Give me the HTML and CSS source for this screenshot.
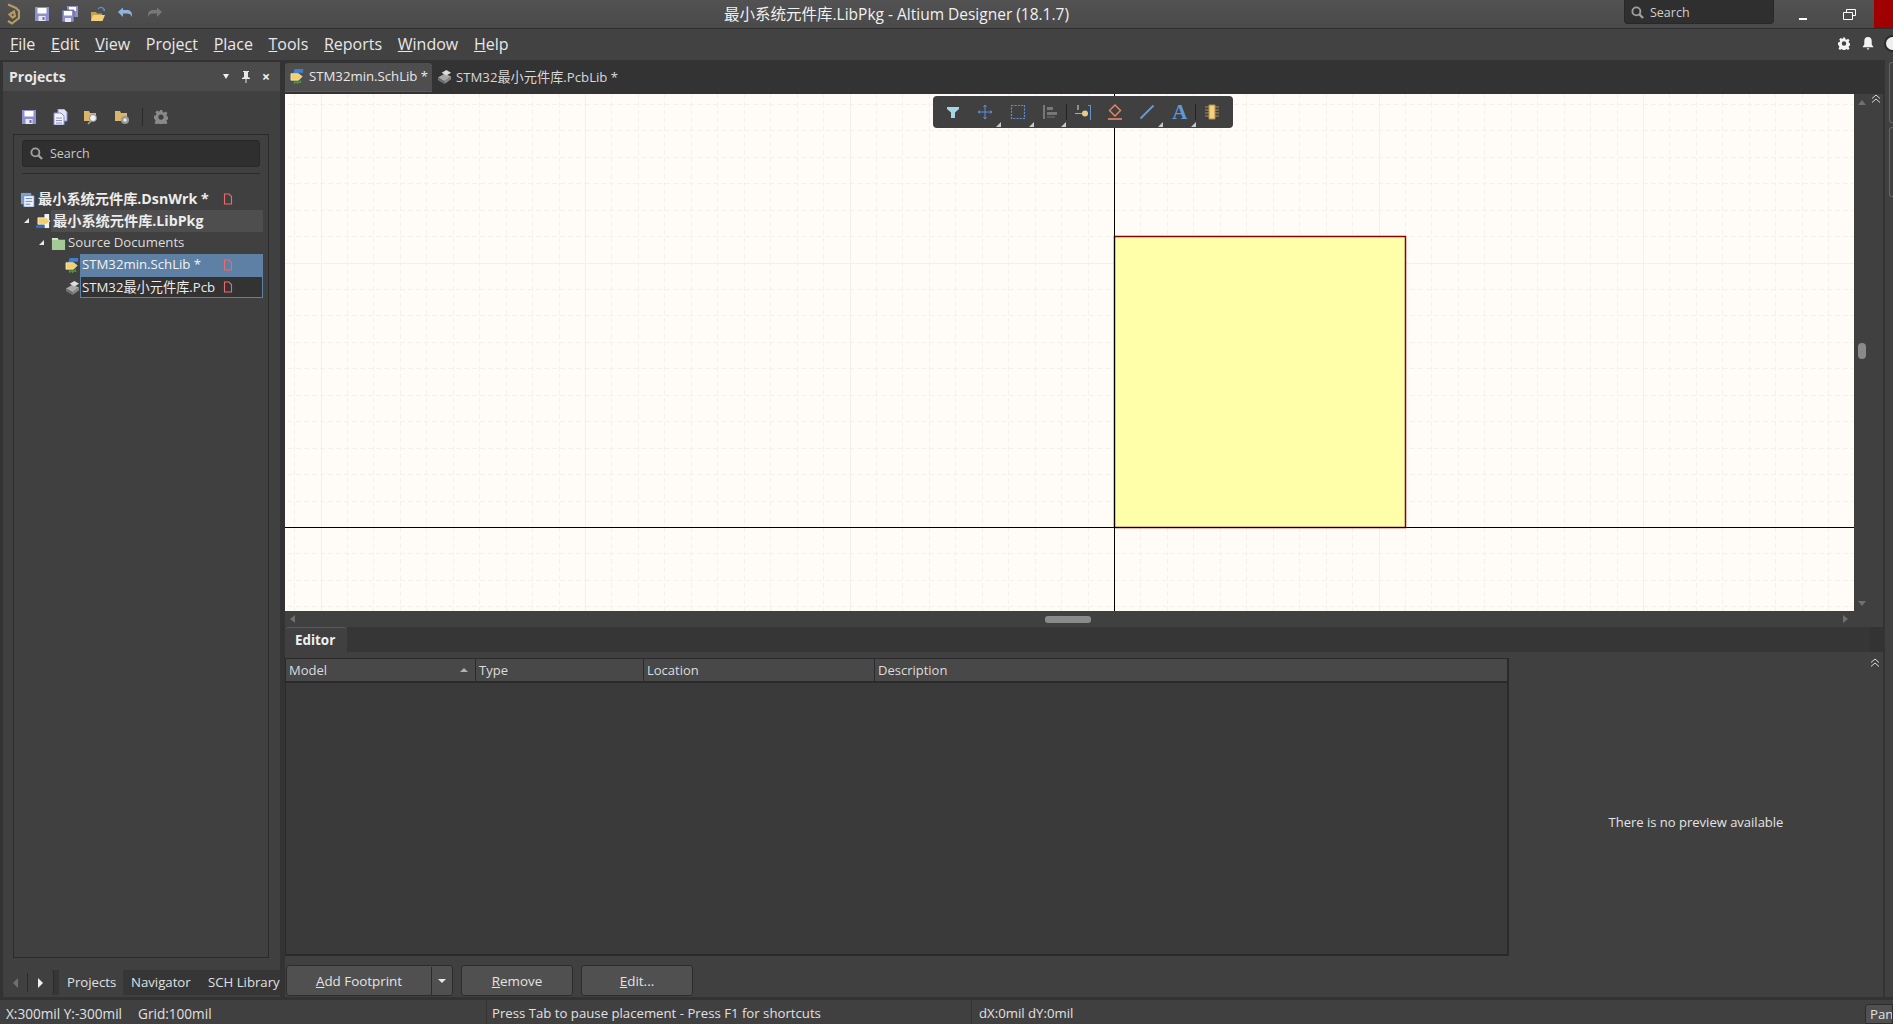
FILE: index.html
```html
<!DOCTYPE html>
<html lang="en">
<head>
    <meta charset="UTF-8">
    <title>最小系统元件库.LibPkg - Altium Designer (18.1.7)</title>
    <link rel="stylesheet" href="styles.css">
</head>
<body>
    <svg class="sprite" xmlns="http://www.w3.org/2000/svg">
        <symbol id="i-save" viewBox="0 0 16 16">
            <path d="M1 1h14v14H1z" fill="#8e90cc"/>
            <path d="M3.500 2h9v5.500h-9z" fill="#fff"/>
            <path d="M4.500 10h7v5h-7z" fill="#e8e8f4"/>
            <path d="M8.500 11h2v3h-2z" fill="#6a6ca8"/>
        </symbol>
        <symbol id="i-saveall" viewBox="0 0 16 16">
            <path d="M5 0h11v11H5z" fill="#8e90cc"/>
            <path d="M7 1h7v4H7z" fill="#fff"/>
            <path d="M0 4h12v12H0z" fill="#8e90cc" stroke="#454545" stroke-width=".6"/>
            <path d="M2 5h8v4.500H2z" fill="#fff"/>
            <path d="M3 12h6v4H3z" fill="#e8e8f4"/>
        </symbol>
        <symbol id="i-open" viewBox="0 0 16 16">
            <path d="M1 6h5l1 1.500h5V15H1z" fill="#c9a050"/>
            <path d="M3 9h12l-2.500 6H1z" fill="#f3cf7c"/>
            <path d="M8 3c2-2.500 4.500-2 6 0" fill="none" stroke="#5b8fd0" stroke-width="1.200"/>
            <path d="M14.800 5.500l-2.600-1.800 3-.9z" fill="#5b8fd0"/>
        </symbol>
        <symbol id="i-undo" viewBox="0 0 16 16">
            <path d="M5 4h4c3.500 0 5.500 2.500 5 7-1-2.500-2.500-3.500-5-3.500H5V11L0 6l5-4.500z" fill="#8fb3dc"/>
        </symbol>
        <symbol id="i-redo" viewBox="0 0 16 16">
            <path d="M11 4H7C3.500 4 1.500 6.500 2 11c1-2.500 2.500-3.500 5-3.500h4V11l5-5-5-4.500z" fill="#777"/>
        </symbol>
        <symbol id="i-pages" viewBox="0 0 16 16">
            <path d="M6 0h6l3 3v9H6z" fill="#dfe4f4" stroke="#8e90cc"/>
            <path d="M2 4h7l3 3v9H2z" fill="#f2f4fb" stroke="#8e90cc"/>
            <path d="M4 9h6M4 11.500h6M4 14h6" stroke="#8e90cc"/>
        </symbol>
        <symbol id="i-doc" viewBox="0 0 10 12">
            <path d="M1.500 1h4.500l2.500 2.500v7.500h-7z" fill="none" stroke="#ee6a6a" stroke-width="1.100"/>
        </symbol>
        <symbol id="i-sch" viewBox="0 0 16 16">
            <path d="M5 0h9v4H9L7 6H3z" fill="#3f7fd0"/>
            <path d="M1 5h8l4 3-4 4H1z" fill="#f2cf70" stroke="#fff6c8" stroke-width=".7"/>
            <path d="M5 13v3M8 13v3M11 12v3M4 14h8" stroke="#4f9a3c" stroke-width="1.200"/>
        </symbol>
        <symbol id="i-pcb" viewBox="0 0 16 16">
            <path d="M1 9l7-4 7 3-7 5z" fill="#a8a8a8"/>
            <path d="M5 4l5-3 5 3-5 3z" fill="#dcdcdc"/>
            <path d="M1 9l7 4v3l-7-4z" fill="#6f6f6f"/>
            <path d="M8 13l7-5v3l-7 5z" fill="#8a8a8a"/>
        </symbol>
        <symbol id="i-wrk" viewBox="0 0 16 16">
            <path d="M1 1h11v12H1z" fill="#7f9fd2"/>
            <path d="M4 4h11v12H4z" fill="#f2f4fa" stroke="#5d7fb8" stroke-width=".8"/>
            <path d="M6 7h7M6 10h7M6 13h5" stroke="#5d7fb8"/>
        </symbol>
        <symbol id="i-pkg" viewBox="0 0 16 16">
            <path d="M9 0h5v15H9z" fill="#eef2fa"/>
            <path d="M2 4h9l4 3.500L11 11H2z" fill="#f2cf70" stroke="#fff" stroke-width=".7"/>
            <path d="M0 12h9v3H0z" fill="#2f6fc0"/>
        </symbol>
        <symbol id="i-folder" viewBox="0 0 16 16">
            <path d="M1 2h6l1 2h7v11H1z" fill="#a4cb95"/>
            <path d="M1 2h6l1 2H1z" fill="#d6eccd"/>
        </symbol>
        <symbol id="i-gear" viewBox="0 0 16 16">
            <path fill-rule="evenodd" d="M6.500 0h3l.4 2.300 1.500.7 2-1.300 2 2.100-1.300 1.900.7 1.600 2.200.4v3l-2.200.4-.7 1.600 1.300 1.900-2 2.100-2-1.300-1.500.7-.4 2.300h-3l-.4-2.300-1.500-.7-2 1.300-2-2.100 1.300-1.900-.7-1.600L0 9.500v-3l2.200-.4.700-1.600-1.300-1.900 2-2.100 2 1.300 1.500-.7zM8 5a3 3 0 100 6 3 3 0 000-6z"/>
        </symbol>
        <symbol id="i-search" viewBox="0 0 14 14">
            <circle cx="5.800" cy="5.800" r="4.300" fill="none" stroke="currentColor" stroke-width="2"/>
            <path d="M9 9l4 4" stroke="currentColor" stroke-width="2.400"/>
        </symbol>
        <symbol id="i-chev" viewBox="0 0 10 9">
            <path d="M1 4.500l4-3.500 4 3.500M1 8.500l4-3.500 4 3.500" fill="none" stroke="#d8d8d8"/>
        </symbol>
    </svg>

    <header class="titlebar">
        <div class="quick">
            <svg class="logo" viewBox="0 0 14 22"><path d="M2 1.500l8 3.500 3 3v7l-7 5.500-4-2.500M7 15l-3.500-3.500L8 8.500l1 4.500-3 2" fill="none" stroke="#b49c62" stroke-width="2.200"/></svg>
            <svg class="ico"><use href="#i-save"/></svg>
            <svg class="ico"><use href="#i-saveall"/></svg>
            <svg class="ico"><use href="#i-open"/></svg>
            <svg class="ico"><use href="#i-undo"/></svg>
            <svg class="ico"><use href="#i-redo"/></svg>
        </div>
        <div class="title">最小系统元件库.LibPkg - Altium Designer (18.1.7)</div>
        <div class="top-search">
            <svg class="search-ico"><use href="#i-search"/></svg>
            <span>Search</span>
        </div>
        <div class="win-btn"><span class="win-min"></span></div>
        <div class="win-btn">
            <svg width="13" height="11" viewBox="0 0 13 11"><path d="M3.500 3V.5h9v6H9.500M.5 3.500h9v7h-9z" fill="none" stroke="#fff"/></svg>
        </div>
        <div class="win-close"></div>
    </header>

    <nav class="menubar">
        <span><u>F</u>ile</span>
        <span><u>E</u>dit</span>
        <span><u>V</u>iew</span>
        <span>Proje<u>c</u>t</span>
        <span><u>P</u>lace</span>
        <span><u>T</u>ools</span>
        <span><u>R</u>eports</span>
        <span><u>W</u>indow</span>
        <span><u>H</u>elp</span>
        <div class="menu-right">
            <svg class="menu-ico"><use href="#i-gear"/></svg>
            <svg class="menu-ico" viewBox="0 0 12 14"><path d="M6 0c3 0 4 2 4 4.500V8l2 3H0l2-3V4.500C2 2 3 0 6 0zM4.500 12h3l-1.500 2z"/></svg>
            <span class="user"></span>
        </div>
    </nav>

    <div class="workspace">
        <aside class="projects">
            <div class="panel-head">
                <span class="panel-title">Projects</span>
                <span class="head-drop"></span>
                <svg class="head-pin" viewBox="0 0 8 12"><path d="M1 0h6v1H6v5l2 1v1H4.500v4h-1V8H0V7l2-1V1H1z" fill="#e8e8e8"/></svg>
                <span class="head-close">×</span>
            </div>
            <div class="panel-tools">
                <svg class="ico"><use href="#i-save"/></svg>
                <svg class="ico"><use href="#i-pages"/></svg>
                <svg class="ico" viewBox="0 0 16 16"><path d="M1 2h5l1 2h6v8H1z" fill="#d8b56a"/><circle cx="10" cy="9" r="3.500" fill="#eef2f8" stroke="#8a8a8a"/><path d="M8 12l-3 3" stroke="#aaa" stroke-width="1.500"/></svg>
                <svg class="ico" viewBox="0 0 16 16"><path d="M1 2h5l1 2h6v8H1z" fill="#d8b56a"/><circle cx="11" cy="11" r="4" fill="#999"/><circle cx="11" cy="11" r="1.700" fill="#eee"/></svg>
                <span class="tool-sep"></span>
                <svg class="ico gear"><use href="#i-gear"/></svg>
            </div>
            <div class="panel-frame">
                <div class="search-box">
                    <svg class="search-ico"><use href="#i-search"/></svg>
                    <span>Search</span>
                </div>
                <div class="search-rule"></div>
                <ul class="tree">
                    <li class="row lvl0 bold">
                        <svg class="tree-ico"><use href="#i-wrk"/></svg>
                        <span class="label">最小系统元件库.DsnWrk *</span>
                        <svg class="doc"><use href="#i-doc"/></svg>
                    </li>
                    <li class="row lvl1 bold">
                        <span class="arrow"></span>
                        <svg class="tree-ico"><use href="#i-pkg"/></svg>
                        <span class="label hover">最小系统元件库.LibPkg</span>
                    </li>
                    <li class="row lvl2">
                        <span class="arrow"></span>
                        <svg class="tree-ico"><use href="#i-folder"/></svg>
                        <span class="label">Source Documents</span>
                    </li>
                    <li class="row lvl3">
                        <svg class="tree-ico"><use href="#i-sch"/></svg>
                        <span class="label selected"><span class="name">STM32min.SchLib *</span></span>
                        <svg class="doc"><use href="#i-doc"/></svg>
                    </li>
                    <li class="row lvl3">
                        <svg class="tree-ico"><use href="#i-pcb"/></svg>
                        <span class="label focused"><span class="name">STM32最小元件库.PcbLib</span></span>
                        <svg class="doc"><use href="#i-doc"/></svg>
                    </li>
                </ul>
            </div>
            <div class="panel-tabs">
                <div class="tab-nav">
                    <span class="nav-left"></span>
                    <span class="nav-right"></span>
                </div>
                <span class="ptab ptab-projects">Projects</span>
                <span class="ptab ptab-nav">Navigator</span>
                <span class="ptab">SCH Library</span>
            </div>
        </aside>

        <main class="center">
            <div class="doc-tabs">
                <div class="doc-tab active">
                    <svg class="tree-ico"><use href="#i-sch"/></svg>
                    <span>STM32min.SchLib *</span>
                </div>
                <div class="doc-tab">
                    <svg class="tree-ico"><use href="#i-pcb"/></svg>
                    <span>STM32最小元件库.PcbLib *</span>
                </div>
            </div>

            <div class="canvas-row">
                <div class="canvas">
                    <svg class="sheet" width="1570" height="517" viewBox="0 0 1570 517">
                        <defs>
                            <pattern id="grid" patternUnits="userSpaceOnUse" x="300" y="-96" width="529" height="529">
                                <path d="M26.500 0V529M53.500 0V529M79.500 0V529M106.500 0V529M132.500 0V529M159.500 0V529M185.500 0V529M212.500 0V529M238.500 0V529M291.500 0V529M317.500 0V529M344.500 0V529M370.500 0V529M397.500 0V529M423.500 0V529M450.500 0V529M476.500 0V529M503.500 0V529" stroke="#f4f1eb" stroke-dasharray="5 3" fill="none"/>
                                <path d="M0 26.500H529M0 53.500H529M0 79.500H529M0 106.500H529M0 132.500H529M0 159.500H529M0 185.500H529M0 212.500H529M0 238.500H529M0 291.500H529M0 317.500H529M0 344.500H529M0 370.500H529M0 397.500H529M0 423.500H529M0 450.500H529M0 476.500H529M0 503.500H529" stroke="#f4f1eb" stroke-dasharray="5 3" fill="none"/>
                                <path d="M.5 0V529M265.500 0V529M0 .5H529M0 265.500H529" stroke="#f3f0ea" fill="none"/>
                            </pattern>
                        </defs>
                        <rect width="1570" height="517" fill="#fffcf7"/>
                        <rect width="1570" height="517" fill="url(#grid)"/>
                        <rect x="829.500" y="142.500" width="291" height="291" fill="#ffffaa" stroke="#860008" stroke-width="1.500"/>
                        <path d="M829.500 0V517M0 433.500H1570" stroke="#000" fill="none"/>
                    </svg>
                    <div class="float-bar">
                        <span class="fb-item"><svg class="fb-ico" viewBox="0 0 16 16"><path d="M2 3h12v2l-4 3.500V14H6V8.500L2 5z" fill="#a8d4e8"/></svg></span>
                        <span class="fb-item corner"><svg class="fb-ico" viewBox="0 0 16 16"><path d="M8 1v14M1 8h14M6.500 3L8 1l1.500 2M6.500 13L8 15l1.500-2M3 6.500L1 8l2 1.500M13 6.500L15 8l-2 1.500" fill="none" stroke="#5f8fd8"/></svg></span>
                        <span class="fb-item corner"><svg class="fb-ico" viewBox="0 0 16 16"><path d="M1.500 1.500h13v13h-13z" fill="none" stroke="#5f8fd8" stroke-width="1.200" stroke-dasharray="2 1.200"/></svg></span>
                        <span class="fb-item corner"><svg class="fb-ico" viewBox="0 0 16 16"><path d="M1 1h2v14H1z" fill="#777"/><path d="M5 3h6v3H5zM5 8h10v3H5z" fill="#777"/><path d="M5 13h8" stroke="#777"/></svg></span>
                        <span class="fb-sep"></span>
                        <span class="fb-item"><svg class="fb-ico" viewBox="0 0 16 16"><path d="M0 9.500h8" stroke="#c9a868"/><circle cx="10" cy="9.500" r="3" fill="#e8c88c"/><path d="M15.500 16V1.500H13" fill="none" stroke="#5f8fd8" stroke-width="1.100"/><path d="M3 1v5" stroke="#ddd"/></svg></span>
                        <span class="fb-item"><svg class="fb-ico" viewBox="0 0 16 16"><path d="M8 1l5.500 5.500L8 12 2.500 6.500z" fill="none" stroke="#e88a6a" stroke-width="1.400"/><path d="M1 15h14" stroke="#e88a6a" stroke-width="1.600"/></svg></span>
                        <span class="fb-item corner"><svg class="fb-ico" viewBox="0 0 16 16"><path d="M1.500 14.500l13-13" stroke="#5f9ad8" stroke-width="2"/></svg></span>
                        <span class="fb-item corner fb-text">A</span>
                        <span class="fb-sep"></span>
                        <span class="fb-item"><svg class="fb-ico" viewBox="0 0 16 16"><path d="M5 1h6v14H5z" fill="#f5cf80" stroke="#a89050"/><path d="M1 3h4M1 6h4M1 9h4M1 12h4M11 3h4M11 6h4M11 9h4M11 12h4" stroke="#a89050"/></svg></span>
                    </div>
                </div>
                <div class="vscroll">
                    <span class="tri tri-up"></span>
                    <span class="v-thumb"></span>
                    <span class="tri tri-down"></span>
                </div>
                <svg class="chev chev-top"><use href="#i-chev"/></svg>
            </div>

            <div class="hscroll">
                <span class="tri tri-left"></span>
                <span class="h-thumb"></span>
                <span class="tri tri-right"></span>
            </div>

            <div class="editor-strip">
                <div class="editor-tab">Editor</div>
            </div>

            <div class="editor">
                <div class="editor-main">
                    <div class="model-table">
                        <div class="model-head">
                            <div class="col col-model">Model<span class="sort"></span></div>
                            <div class="col col-type">Type</div>
                            <div class="col col-loc">Location</div>
                            <div class="col col-desc">Description</div>
                        </div>
                    </div>
                    <div class="buttons">
                        <div class="btn btn-add">
                            <span class="btn-main"><u>A</u>dd Footprint</span>
                            <span class="btn-drop"></span>
                        </div>
                        <div class="btn btn-std"><span><u>R</u>emove</span></div>
                        <div class="btn btn-std"><span><u>E</u>dit...</span></div>
                    </div>
                </div>
                <div class="preview">
                    <svg class="chev chev-preview"><use href="#i-chev"/></svg>
                    <span>There is no preview available</span>
                </div>
            </div>
        </main>

        <div class="dock-strip">
            <span class="dock-tab dock-first"></span>
            <span class="dock-tab dock-second"></span>
        </div>
    </div>

    <footer class="statusbar">
        <div class="st st-pos"><span>X:300mil Y:-300mil</span><span>Grid:100mil</span></div>
        <div class="st st-msg">Press Tab to pause placement - Press F1 for shortcuts</div>
        <div class="st st-delta">dX:0mil dY:0mil</div>
        <div class="st-panels">Pan</div>
    </footer>
</body>
</html>
```

FILE: styles.css
```css
* {
    box-sizing: border-box;
}
html, body {
    margin: 0;
    padding: 0;
}
body {
    width: 1893px;
    height: 1024px;
    overflow: hidden;
    display: flex;
    flex-direction: column;
    background-color: #404040;
    color: #e4e4e4;
    font-family: "Open Sans", "Noto Sans CJK SC", sans-serif;
    font-size: 13px;
}
ul {
    list-style: none;
    margin: 0;
    padding: 0;
}
.sprite {
    position: absolute;
    width: 0;
    height: 0;
}
.ico {
    width: 16px;
    height: 16px;
    flex: none;
}

/* title bar */
.titlebar {
    height: 29px;
    flex: none;
    display: flex;
    align-items: flex-start;
    background: linear-gradient(#525252, #4a4a4a);
    border-bottom: 1px solid #2e2e2e;
}
.quick {
    width: 724px;
    height: 28px;
    display: flex;
    align-items: center;
    gap: 12px;
    padding-left: 6px;
    flex: none;
}
.logo {
    width: 14px;
    height: 22px;
    margin-right: 2px;
    flex: none;
}
.title {
    width: 346px;
    line-height: 29px;
    font-size: 15.500px;
    color: #f0f0f0;
    white-space: nowrap;
}
.top-search {
    width: 150px;
    height: 24px;
    margin-left: 554px;
    display: flex;
    align-items: center;
    gap: 6px;
    padding: 1px 0 0 6px;
    background-color: #2f2f2f;
    border: 1px solid #282828;
    border-top: none;
    border-radius: 0 0 4px 4px;
    font-size: 12.500px;
    color: #d0d0d0;
}
.search-ico {
    width: 13px;
    height: 13px;
    color: #a0a0a0;
    flex: none;
}
.win-btn {
    width: 50px;
    height: 28px;
    flex: none;
    display: flex;
    align-items: center;
    justify-content: center;
}
.win-min {
    width: 8px;
    height: 2px;
    margin: 9px 0 0 8px;
    background-color: #fff;
}
.win-close {
    flex: 1;
    height: 28px;
    background-color: #a00000;
}

/* menu */
.menubar {
    height: 31px;
    flex: none;
    display: flex;
    align-items: center;
    padding: 0 0 2px 10px;
    gap: 15.700px;
    background-color: #424242;
    font-size: 16px;
    color: #e8e8e8;
}
.menu-right {
    margin-left: auto;
    display: flex;
    align-items: center;
    gap: 12px;
    margin-right: -6px;
}
.menu-ico {
    width: 12px;
    height: 13px;
    fill: #f4f4f4;
}
.user {
    width: 13px;
    height: 13px;
    border-radius: 50%;
    background-color: #f0f0f0;
    box-shadow: 0 0 0 2px #2c2c2c;
}

/* main area */
.workspace {
    height: 940px;
    flex: none;
    display: flex;
    background-color: #333;
    border-bottom: 3px solid #333;
}
.projects {
    width: 277px;
    margin: 2px 0 0 3px;
    flex: none;
    display: flex;
    flex-direction: column;
    background-color: #404040;
}
.panel-head {
    height: 29px;
    flex: none;
    display: flex;
    align-items: center;
    padding: 0 8px 0 6px;
    background-color: #4b4b4b;
}
.panel-title {
    flex: 1;
    font-size: 14px;
    font-weight: 700;
    color: #e8e8e8;
}
.head-drop {
    border-top: 5px solid #f0f0f0;
    border-left: 3.500px solid transparent;
    border-right: 3.500px solid transparent;
    margin-right: 13px;
}
.head-close {
    width: 12px;
    text-align: center;
    font-size: 14px;
    line-height: 14px;
    font-weight: 700;
    color: #f0f0f0;
}
.head-pin {
    width: 8px;
    height: 12px;
    margin-right: 10px;
}
.panel-tools {
    height: 43px;
    flex: none;
    display: flex;
    align-items: center;
    gap: 15px;
    padding: 9px 0 0 18px;
}
.tool-sep {
    width: 1px;
    height: 18px;
    margin: 0 -4px 0 -3px;
    background-color: #2a2a2a;
}
.gear {
    width: 14px;
    height: 14px;
    fill: #8a8a8a;
}
.panel-frame {
    height: 824px;
    margin: 0 11px 0 10px;
    flex: none;
    border: 1px solid #2a2a2a;
    padding-top: 5px;
}
.search-box {
    height: 27px;
    margin: 0 8px;
    display: flex;
    align-items: center;
    gap: 7px;
    padding-left: 7px;
    background-color: #2f2f2f;
    border: 1px solid #282828;
    border-radius: 3px;
    font-size: 12.500px;
    color: #c8c8c8;
}
.search-rule {
    height: 1px;
    margin: 6px 8px 14px;
    background-color: #2a2a2a;
}
.tree {
    margin-right: 5px;
}
.row {
    position: relative;
    height: 22px;
    display: flex;
    align-items: center;
    font-size: 13.200px;
    white-space: nowrap;
    color: #dcdcdc;
}
.row.bold {
    font-size: 14.200px;
    font-weight: 700;
    color: #ececec;
}
.lvl0 {
    padding-left: 6px;
}
.lvl1 {
    padding-left: 9px;
}
.lvl2 {
    padding-left: 24px;
}
.lvl3 {
    padding-left: 51px;
}
.arrow {
    width: 13px;
    height: 6px;
    flex: none;
    position: relative;
}
.arrow::before {
    content: "";
    position: absolute;
    left: 1px;
    top: 0;
    border-left: 5px solid transparent;
    border-bottom: 5px solid #e8e8e8;
}
.tree-ico {
    width: 15px;
    height: 15px;
    flex: none;
}
.label {
    flex: 1;
    height: 100%;
    display: flex;
    align-items: center;
    padding: 0 0 2px 2px;
    overflow: hidden;
}
.lvl0 .label {
    padding-left: 3px;
}
.label.hover {
    background-color: #4e4e4e;
}
.label.selected {
    height: 23px;
    background-color: #5d80a4;
    color: #f2f2f2;
}
.label.focused {
    height: 21px;
    margin-top: 1px;
    border: 1px solid #5d80a4;
    border-top: none;
    padding-left: 1px;
    background-color: #333;
    color: #ececec;
}
.name {
    width: 134px;
    overflow: hidden;
    flex: none;
}
.doc {
    position: absolute;
    left: 209px;
    top: 5px;
    width: 10px;
    height: 12px;
}
.panel-tabs {
    height: 25px;
    margin-top: 12px;
    flex: none;
    display: flex;
    background-color: #363636;
    font-size: 13.200px;
    white-space: nowrap;
    overflow: hidden;
}
.tab-nav {
    width: 51px;
    margin-right: 5px;
    flex: none;
    display: flex;
    align-items: center;
    justify-content: space-around;
    background-color: #404040;
    border-radius: 3px;
    border-right: 1px solid #2a2a2a;
    position: relative;
}
.tab-nav::after {
    content: "";
    position: absolute;
    left: 24px;
    top: 3px;
    bottom: 3px;
    width: 1px;
    background-color: #2a2a2a;
}
.nav-left {
    border-right: 5px solid #707070;
    border-top: 5px solid transparent;
    border-bottom: 5px solid transparent;
}
.nav-right {
    border-left: 5px solid #f0f0f0;
    border-top: 5px solid transparent;
    border-bottom: 5px solid transparent;
}
.ptab {
    padding: 3px 0 0 8px;
    color: #e0e0e0;
}
.ptab-projects {
    width: 64px;
    background-color: #404040;
}
.ptab-nav {
    width: 77px;
}
.center {
    width: 1598px;
    margin-left: 5px;
    flex: none;
    display: flex;
    flex-direction: column;
    position: relative;
}

/* document tabs */
.doc-tabs {
    height: 34px;
    flex: none;
    display: flex;
    padding-top: 3px;
    font-size: 13.200px;
    white-space: nowrap;
}
.doc-tab {
    height: 29px;
    display: flex;
    align-items: center;
    gap: 4px;
    padding: 0 5px 2px;
    color: #d8d8d8;
}
.doc-tab.active {
    width: 147px;
    background-color: #4e4e4e;
    border-radius: 3px 3px 0 0;
    border-bottom: 1px solid #5a5a5a;
    color: #e8e8e8;
}

/* schematic sheet */
.canvas-row {
    height: 517px;
    flex: none;
    display: flex;
    position: relative;
    background-color: #404040;
}
.canvas {
    width: 1569px;
    flex: none;
    position: relative;
    overflow: hidden;
}
.sheet {
    display: block;
}
.float-bar {
    position: absolute;
    left: 648px;
    top: 2px;
    width: 300px;
    height: 32px;
    display: flex;
    align-items: center;
    padding-left: 9px;
    gap: 10.400px;
    background-color: #404040;
    border-radius: 4px;
}
.fb-item {
    width: 22px;
    height: 22px;
    flex: none;
    position: relative;
    display: flex;
    align-items: center;
    justify-content: center;
}
.fb-item.corner::after {
    content: "";
    position: absolute;
    right: -5px;
    bottom: -4px;
    border-left: 5px solid transparent;
    border-bottom: 5px solid #c8c8c8;
}
.fb-ico {
    width: 16px;
    height: 16px;
}
.fb-text {
    font-family: "Liberation Serif", serif;
    font-size: 21px;
    font-weight: 700;
    line-height: 22px;
    color: #5f9ad8;
}
.fb-sep {
    width: 1px;
    height: 16px;
    margin: 0 -5.700px;
    background-color: #222;
    flex: none;
}
.vscroll {
    width: 16px;
    position: relative;
    flex: none;
}
.tri {
    position: absolute;
    width: 0;
    height: 0;
}
.tri-up {
    left: 4px;
    top: 6px;
    border: 4px solid transparent;
    border-bottom: 5px solid #707070;
    border-top: none;
}
.tri-down {
    left: 4px;
    bottom: 5px;
    border: 4px solid transparent;
    border-top: 5px solid #707070;
    border-bottom: none;
}
.v-thumb {
    position: absolute;
    left: 4px;
    top: 249px;
    width: 8px;
    height: 16px;
    border-radius: 4px;
    background-color: #8a8a8a;
}
.chev {
    position: absolute;
    width: 10px;
    height: 9px;
}
.chev-top {
    left: 1586px;
    top: 0;
}
.hscroll {
    height: 16px;
    flex: none;
    position: relative;
    background-color: #404040;
}
.tri-left {
    left: 5px;
    top: 4px;
    border: 4px solid transparent;
    border-right: 5px solid #707070;
    border-left: none;
}
.tri-right {
    left: 1558px;
    top: 4px;
    border: 4px solid transparent;
    border-left: 5px solid #707070;
    border-right: none;
}
.h-thumb {
    position: absolute;
    left: 760px;
    top: 5px;
    width: 46px;
    height: 7px;
    border-radius: 3px;
    background-color: #8a8a8a;
}

/* editor panel */
.editor-strip {
    height: 25px;
    width: 1585px;
    flex: none;
    background-color: #363636;
}
.editor-tab {
    width: 62px;
    height: 25px;
    padding: 3px 0 0 10px;
    background-color: #404040;
    border-top: 1px solid #5a5a5a;
    border-radius: 3px 3px 0 0;
    font-size: 13.400px;
    font-weight: 700;
    color: #f0f0f0;
}
.editor {
    height: 345px;
    flex: none;
    display: flex;
    background-color: #404040;
}
.editor-main {
    width: 1224px;
    flex: none;
    display: flex;
    flex-direction: column;
    padding-top: 6px;
}
.model-table {
    height: 298px;
    flex: none;
    background-color: #3a3a3a;
    border: 1px solid #2a2a2a;
    border-width: 1px 2px 2px 1px;
}
.model-head {
    height: 24px;
    display: flex;
    background-color: #484848;
    border-bottom: 2px solid #2a2a2a;
    font-size: 13px;
    color: #dcdcdc;
}
.col {
    padding: 2px 0 0 3px;
    position: relative;
    border-right: 1px solid #2a2a2a;
    height: 22px;
}
.col-model {
    width: 190px;
}
.col-type {
    width: 168px;
}
.col-loc {
    width: 231px;
}
.col-desc {
    border-right: none;
}
.sort {
    position: absolute;
    right: 7px;
    top: 9px;
    border: 4px solid transparent;
    border-bottom: 4px solid #b0b0b0;
    border-top: none;
}
.buttons {
    margin-top: 9px;
    height: 31px;
    display: flex;
    gap: 8px;
    padding-left: 1px;
    font-size: 13.400px;
    color: #e4e4e4;
}
.btn {
    height: 31px;
    background-color: #505050;
    border: 1px solid #2c2c2c;
    border-radius: 3px;
    display: flex;
    align-items: center;
    justify-content: center;
}
.btn-add {
    width: 167px;
}
.btn-main {
    width: 147px;
    text-align: center;
    border-right: 1px solid #2c2c2c;
    line-height: 28px;
}
.btn-drop {
    flex: 1;
    height: 0;
    margin: 0 6px;
    border-top: 4px solid #e8e8e8;
    border-left: 4px solid transparent;
    border-right: 4px solid transparent;
}
.btn-std {
    width: 112px;
}
.preview {
    flex: 1;
    position: relative;
    display: flex;
    justify-content: center;
    padding-top: 161px;
    font-size: 13px;
    color: #e4e4e4;
}
.chev-preview {
    right: 3px;
    top: 6px;
}

/* right edge */
.dock-strip {
    flex: 1;
    background-color: #404040;
    padding: 2px 0 0 4px;
    border-left: 2px solid #333;
    display: flex;
    flex-direction: column;
    gap: 4px;
}
.dock-tab {
    display: block;
    background-color: #404040;
    border: 1px solid #666;
    border-right: none;
    border-radius: 3px 0 0 3px;
}
.dock-first {
    height: 61px;
}
.dock-second {
    height: 70px;
}

/* status bar */
.statusbar {
    height: 24px;
    flex: none;
    display: flex;
    align-items: center;
    font-size: 13.200px;
    color: #e0e0e0;
    white-space: nowrap;
    background-color: #404040;
}
.st {
    height: 100%;
    display: flex;
    align-items: center;
    padding-top: 2px;
}
.st-pos {
    width: 487px;
    padding-left: 6px;
    gap: 16px;
    border-right: 1px solid #333;
    font-size: 13.600px;
}
.st-msg {
    width: 485px;
    padding-left: 5px;
    border-right: 1px solid #333;
}
.st-delta {
    padding-left: 7px;
    width: 893px;
}
.st-panels {
    height: 20px;
    margin-top: 4px;
    flex: 1;
    padding: 0 0 0 4px;
    background-color: #505050;
    border: 1px solid #2c2c2c;
    border-radius: 3px 0 0 0;
    overflow: hidden;
}
```
